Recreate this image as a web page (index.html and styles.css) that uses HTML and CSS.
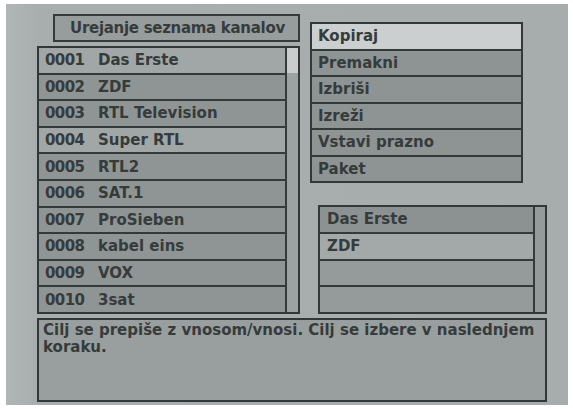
FILE: index.html
```html
<!DOCTYPE html>
<html>
<head>
<meta charset="utf-8">
<link rel="stylesheet" href="styles.css">
</head>
<body>
<div class="screen">
  <div class="top">
    <div class="left-col">
      <div class="title">Urejanje seznama kanalov</div>
      <div class="list">
        <div class="rows">
          <div class="row light"><span class="num">0001</span><span>Das Erste</span></div>
          <div class="row"><span class="num">0002</span><span>ZDF</span></div>
          <div class="row"><span class="num">0003</span><span>RTL Television</span></div>
          <div class="row light"><span class="num">0004</span><span>Super RTL</span></div>
          <div class="row"><span class="num">0005</span><span>RTL2</span></div>
          <div class="row"><span class="num">0006</span><span>SAT.1</span></div>
          <div class="row"><span class="num">0007</span><span>ProSieben</span></div>
          <div class="row"><span class="num">0008</span><span>kabel eins</span></div>
          <div class="row"><span class="num">0009</span><span>VOX</span></div>
          <div class="row"><span class="num">0010</span><span>3sat</span></div>
        </div>
        <div class="scroll"><div class="thumb"></div></div>
      </div>
    </div>
    <div class="right-col">
      <div class="menu">
        <div class="mitem active">Kopiraj</div>
        <div class="mitem">Premakni</div>
        <div class="mitem">Izbriši</div>
        <div class="mitem">Izreži</div>
        <div class="mitem">Vstavi prazno</div>
        <div class="mitem">Paket</div>
      </div>
      <div class="target">
        <div class="trows">
          <div class="trow">Das Erste</div>
          <div class="trow light">ZDF</div>
          <div class="trow mid"></div>
          <div class="trow mid"></div>
        </div>
        <div class="tscroll"></div>
      </div>
    </div>
  </div>
  <div class="info">Cilj se prepiše z vnosom/vnosi. Cilj se izbere v naslednjem koraku.</div>
</div>
</body>
</html>
```

FILE: styles.css
```css
html, body {
  margin: 0;
  padding: 0;
  background: #ffffff;
}
body {
  font-family: "DejaVu Sans", "Liberation Sans", sans-serif;
  font-size: 15px;
  font-weight: bold;
  color: #363b3b;
}
.screen {
  margin: 4px 0 0 6px;
  width: 562px;
  height: 401px;
  box-sizing: border-box;
  padding: 10px 0 0 31px;
  background: linear-gradient(90deg, #b0b6b6 0%, #a8aeae 6%, #a7adad 100%);
}
.top {
  display: flex;
}
.left-col {
  width: 263px;
  display: flex;
  flex-direction: column;
}
.title {
  margin-left: 16px;
  width: 247px;
  height: 28px;
  box-sizing: border-box;
  border: 2px solid #353b3b;
  background: #979d9d;
  display: flex;
  align-items: center;
  justify-content: center;
  letter-spacing: -0.3px;
  padding-left: 2px;
}
.list {
  margin-top: 4px;
  height: 268px;
  box-sizing: border-box;
  border: 2px solid #323838;
  display: flex;
}
.rows {
  flex: 1;
  display: flex;
  flex-direction: column;
}
.row {
  flex: 1;
  display: flex;
  align-items: center;
  padding-left: 6px;
  background: #8f9595;
  border-bottom: 2px solid #343a3a;
}
.row:last-child {
  border-bottom: none;
}
.row.light {
  background: #a1a7a7;
}
.num {
  width: 53px;
  letter-spacing: -0.6px;
}
.scroll {
  width: 11px;
  border-left: 2px solid #343a3a;
  background: #9ca2a2;
}
.thumb {
  height: 25px;
  background: #c9cdcd;
}
.right-col {
  margin-left: 10px;
  display: flex;
  flex-direction: column;
}
.menu {
  margin-top: 8px;
  width: 213px;
  height: 161px;
  box-sizing: border-box;
  border: 2px solid #323838;
  display: flex;
  flex-direction: column;
}
.mitem {
  flex: 1;
  display: flex;
  align-items: center;
  padding-left: 6px;
  background: #8e9494;
  border-bottom: 2px solid #343a3a;
}
.mitem:last-child {
  border-bottom: none;
}
.mitem.active {
  background: #cbcfcf;
}
.target {
  margin: 22px 0 0 8px;
  width: 229px;
  height: 109px;
  box-sizing: border-box;
  border: 2px solid #323838;
  display: flex;
}
.trows {
  flex: 1;
  display: flex;
  flex-direction: column;
}
.trow {
  flex: 1;
  display: flex;
  align-items: center;
  padding-left: 7px;
  background: #8c9292;
  border-bottom: 2px solid #343a3a;
}
.trow:last-child {
  border-bottom: none;
}
.trow.light {
  background: #a3a9a9;
}
.trow.mid {
  background: #959b9b;
}
.tscroll {
  width: 10px;
  border-left: 2px solid #343a3a;
  background: #959b9b;
}
.info {
  margin-top: 4px;
  width: 510px;
  height: 84px;
  box-sizing: border-box;
  border: 2px solid #323838;
  background: #999f9f;
  padding: 2px 10px 0 4px;
  line-height: 17px;
}
```
